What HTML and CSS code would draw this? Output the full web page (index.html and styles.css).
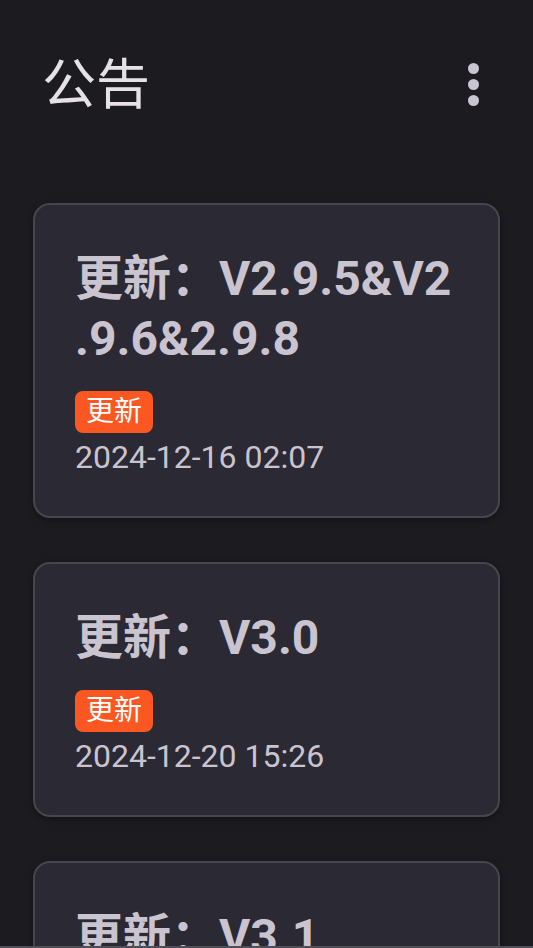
FILE: index.html
```html
<!DOCTYPE html>
<html lang="zh-CN">
<head>
  <meta charset="UTF-8" />
  <meta name="viewport" content="width=device-width, initial-scale=1.0" />
  <title>公告</title>
  <link rel="stylesheet" href="styles.css">
</head>
<body>
  <header class="topbar">
    <h1 class="page-title">公告</h1>
    <button class="menu-btn" aria-label="更多">
      <span class="dot"></span>
      <span class="dot"></span>
      <span class="dot"></span>
    </button>
  </header>

  <main class="notice-list">
    <article class="notice-card">
      <h2 class="notice-title">更新：V2.9.5&amp;V2.9.6&amp;2.9.8</h2>
      <span class="notice-tag">更新</span>
      <div class="notice-date">2024-12-16 02:07</div>
    </article>

    <article class="notice-card">
      <h2 class="notice-title">更新：V3.0</h2>
      <span class="notice-tag">更新</span>
      <div class="notice-date">2024-12-20 15:26</div>
    </article>

    <article class="notice-card">
      <h2 class="notice-title">更新：V3.1</h2>
      <span class="notice-tag">更新</span>
      <div class="notice-date">2024-12-24 10:00</div>
    </article>
  </main>

  <div class="nav-edge"></div>
</body>
</html>
```

FILE: styles.css
```css
body {
  margin: 0;
  background-color: #1c1b1f;
  font-family: Roboto, "Noto Sans CJK SC", sans-serif;
  overflow: hidden;
}
.topbar {
  height: 172px;
  display: flex;
  align-items: center;
  justify-content: space-between;
  padding: 0 45px 0 42px;
}
.page-title {
  margin: 0;
  font-size: 54px;
  font-weight: 400;
  color: #e6e1e5;
  line-height: 1;
}
.menu-btn {
  background: none;
  border: 0;
  padding: 0;
  display: flex;
  flex-direction: column;
  gap: 5px;
  margin-right: 9px;
  margin-top: -3px;
}
.dot {
  width: 11px;
  height: 11px;
  border-radius: 50%;
  background: #cac4d0;
}
.notice-list {
  padding: 31px 33px 0 33px;
  display: flex;
  flex-direction: column;
  gap: 44px;
}
.notice-card {
  background: #2b2933;
  border: 2px solid #47454d;
  border-radius: 17px;
  padding: 44px 36px 39px 40px;
  box-shadow: 0 2px 6px rgba(0, 0, 0, 0.35);
}
.notice-title {
  margin: 0 0 22px 0;
  font-size: 48px;
  font-weight: 700;
  line-height: 60px;
  color: #cac4d0;
  word-break: break-all;
  line-break: anywhere;
}
.notice-tag {
  display: inline-block;
  background: #fa5722;
  color: #fff;
  font-size: 28px;
  line-height: 42px;
  padding: 0 11px;
  border-radius: 8px;
  vertical-align: top;
}
.notice-date {
  margin-top: 4px;
  font-size: 32px;
  line-height: 40px;
  color: #cac4d0;
}
.nav-edge {
  position: fixed;
  left: 0;
  right: 0;
  bottom: 0;
  height: 2px;
  background: #4f4d55;
}
```
